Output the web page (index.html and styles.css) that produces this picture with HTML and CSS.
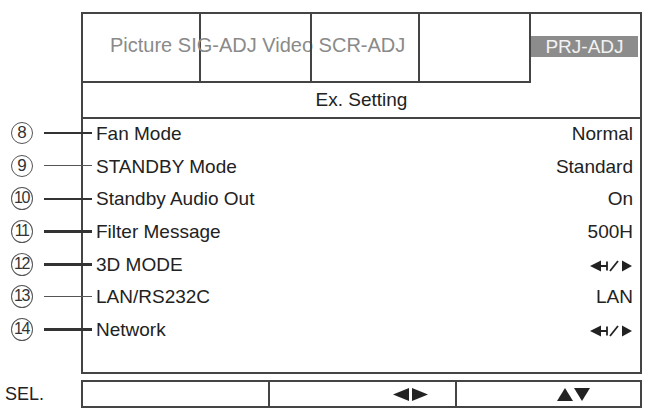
FILE: index.html
```html
<!DOCTYPE html>
<html lang="en">
  <head>
    <meta charset="UTF-8" />
    <meta name="viewport" content="width=device-width, initial-scale=1.0" />
    <title>PRJ-ADJ - Ex. Setting</title>
    <link rel="stylesheet" href="styles.css">
  </head>
  <body>
    <section class="panel">
      <nav class="tabs">
        <div class="tab tab-first">
          <span class="tab-text">Picture SIG-ADJ Video SCR-ADJ</span>
        </div>
        <div class="tab tab-second"></div>
        <div class="tab tab-third"></div>
        <div class="tab tab-fourth"></div>
        <div class="tab tab-active">
          <span class="tab-badge">PRJ-ADJ</span>
        </div>
      </nav>

      <header class="menu-title">Ex. Setting</header>

      <ul class="items">
        <li class="item">
          <span class="callout"><span class="num">8</span><span class="leader"></span></span>
          <span class="label">Fan Mode</span>
          <span class="value">Normal</span>
        </li>
        <li class="item">
          <span class="callout"><span class="num">9</span><span class="leader thin"></span></span>
          <span class="label">STANDBY Mode</span>
          <span class="value">Standard</span>
        </li>
        <li class="item">
          <span class="callout"><span class="num two">10</span><span class="leader"></span></span>
          <span class="label">Standby Audio Out</span>
          <span class="value">On</span>
        </li>
        <li class="item">
          <span class="callout"><span class="num two">11</span><span class="leader"></span></span>
          <span class="label">Filter Message</span>
          <span class="value">500H</span>
        </li>
        <li class="item">
          <span class="callout"><span class="num two">12</span><span class="leader"></span></span>
          <span class="label">3D MODE</span>
          <span class="value">
            <svg class="enter-icon" width="43" height="12" viewBox="0 0 43 12">
              <polygon points="0,6 11,0.5 11,11.5" fill="#222" />
              <line x1="10" y1="6" x2="17" y2="6" stroke="#222" stroke-width="2" />
              <line x1="17" y1="1.5" x2="17" y2="10.5" stroke="#222" stroke-width="1.8" />
              <line x1="20" y1="11" x2="28" y2="1" stroke="#222" stroke-width="1.8" />
              <polygon points="32,0.5 32,11.5 42,6" fill="#222" />
            </svg>
          </span>
        </li>
        <li class="item">
          <span class="callout"><span class="num two">13</span><span class="leader thin"></span></span>
          <span class="label">LAN/RS232C</span>
          <span class="value">LAN</span>
        </li>
        <li class="item">
          <span class="callout"><span class="num two">14</span><span class="leader"></span></span>
          <span class="label">Network</span>
          <span class="value">
            <svg class="enter-icon" width="43" height="12" viewBox="0 0 43 12">
              <polygon points="0,6 11,0.5 11,11.5" fill="#222" />
              <line x1="10" y1="6" x2="17" y2="6" stroke="#222" stroke-width="2" />
              <line x1="17" y1="1.5" x2="17" y2="10.5" stroke="#222" stroke-width="1.8" />
              <line x1="20" y1="11" x2="28" y2="1" stroke="#222" stroke-width="1.8" />
              <polygon points="32,0.5 32,11.5 42,6" fill="#222" />
            </svg>
          </span>
        </li>
      </ul>
    </section>

    <footer class="guide">
      <span class="guide-label">SEL.</span>
      <div class="guide-bar">
        <div class="guide-cell"></div>
        <div class="guide-cell guide-lr">
          <svg width="35" height="13" viewBox="0 0 35 13">
            <polygon points="0,6.5 16,0 16,13" fill="#222" />
            <polygon points="19,0 19,13 35,6.5" fill="#222" />
          </svg>
        </div>
        <div class="guide-cell guide-ud">
          <svg width="33" height="13" viewBox="0 0 33 13">
            <polygon points="0,13 8,0 16,13" fill="#222" />
            <polygon points="17,0 33,0 25,13" fill="#222" />
          </svg>
        </div>
      </div>
    </footer>
  </body>
</html>
```

FILE: styles.css
```css
* {
  box-sizing: border-box;
}

body {
  margin: 0;
  width: 648px;
  height: 412px;
  background: #fff;
  color: #222;
  font-family: "Liberation Sans", Arial, sans-serif;
  font-size: 19px;
  overflow: hidden;
}

.panel {
  margin: 12px 0 0 81px;
  width: 561px;
  height: 362px;
  border: 2px solid #444;
  display: flex;
  flex-direction: column;
}

/* tab strip */
.tabs {
  display: flex;
  height: 69px;
}

.tab {
  border-bottom: 2px solid #444;
  border-right: 2px solid #444;
}

.tab-first {
  width: 118px;
  padding: 20px 0 0 27px;
}
.tab-second {
  width: 111px;
}
.tab-third {
  width: 108px;
}
.tab-fourth {
  width: 111px;
}

.tab-text {
  white-space: nowrap;
  color: #8a8a8a;
  font-size: 20px;
}

.tab-active {
  flex: 1;
  border: none;
  padding-top: 22px;
}

.tab-badge {
  display: block;
  width: 107px;
  height: 21px;
  line-height: 21px;
  background: #8c8c8c;
  color: #f2f2f2;
  text-align: center;
  font-size: 19px;
}

.menu-title {
  height: 36px;
  line-height: 33px;
  text-align: center;
  border-bottom: 2px solid #444;
}

/* setting rows */
.items {
  list-style: none;
  margin: 0;
  padding: 0;
}

.item {
  position: relative;
  display: flex;
  align-items: center;
  justify-content: space-between;
  height: 32.7px;
  padding: 0 7px 3px 13px;
}

.value {
  display: flex;
  align-items: center;
}

.enter-icon {
  display: block;
  flex-shrink: 0;
  margin-top: 2px;
}

/* numbered callouts on the left margin */
.callout {
  position: absolute;
  left: -72px;
  top: 3px;
  display: flex;
  align-items: center;
}

.num {
  width: 22px;
  height: 22px;
  border: 1.5px solid #555;
  border-radius: 50%;
  font-size: 17px;
  line-height: 19px;
  text-align: center;
  color: #333;
}

.num.two {
  height: 23px;
  font-size: 16px;
  line-height: 20px;
  letter-spacing: -1.5px;
  text-indent: -1px;
}

.leader {
  width: 48px;
  height: 2.5px;
  margin-left: 11px;
  background: #333;
}

.leader.thin {
  height: 1px;
  background: #555;
}

/* key guide */
.guide {
  display: flex;
  align-items: center;
  margin-top: 6px;
}

.guide-label {
  width: 81px;
  padding-left: 5px;
  font-size: 18px;
}

.guide-bar {
  display: flex;
  width: 561px;
  height: 28px;
  border: 2px solid #444;
}

.guide-cell {
  width: 187px;
  display: flex;
  align-items: center;
  border-right: 2px solid #444;
}
.guide-cell:last-child {
  flex: 1;
  border-right: none;
}

.guide-lr {
  padding-left: 123px;
}

.guide-ud {
  padding-left: 100px;
}
```
